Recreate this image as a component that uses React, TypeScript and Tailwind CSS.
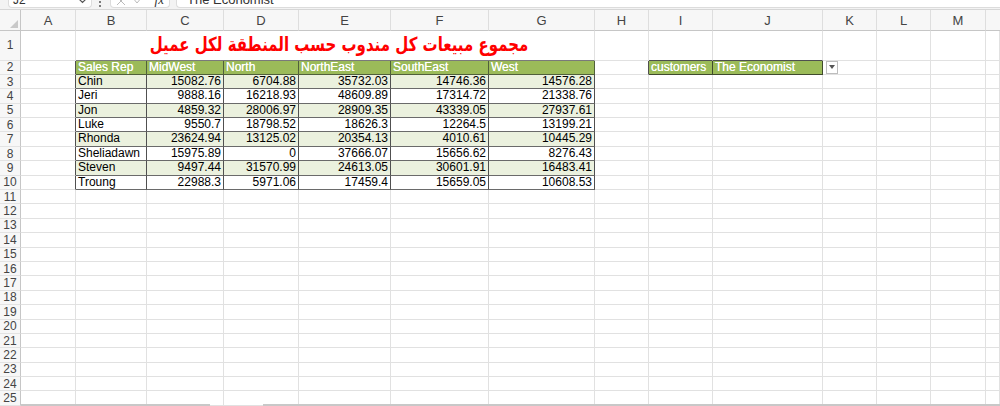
import React from "react";

const COLS = "grid grid-cols-[21px_55px_71px_77px_75px_92px_98px_106px_54px_64px_110px_54px_54px_55px_14px]";
const LETTERS = ["A", "B", "C", "D", "E", "F", "G", "H", "I", "J", "K", "L", "M", "N"];

const HEAD = ["Sales Rep", "MidWest", "North", "NorthEast", "SouthEast", "West"];
const DATA: (string)[][] = [
  ["Chin", "15082.76", "6704.88", "35732.03", "14746.36", "14576.28"],
  ["Jeri", "9888.16", "16218.93", "48609.89", "17314.72", "21338.76"],
  ["Jon", "4859.32", "28006.97", "28909.35", "43339.05", "27937.61"],
  ["Luke", "9550.7", "18798.52", "18626.3", "12264.5", "13199.21"],
  ["Rhonda", "23624.94", "13125.02", "20354.13", "4010.61", "10445.29"],
  ["Sheliadawn", "15975.89", "0", "37666.07", "15656.62", "8276.43"],
  ["Steven", "9497.44", "31570.99", "24613.05", "30601.91", "16483.41"],
  ["Troung", "22988.3", "5971.06", "17459.4", "15659.05", "10608.53"],
];

const font = { fontFamily: "'Liberation Sans', Arial, sans-serif" };

function RowHeader({ n }: { n: number }) {
  return (
    <div className="flex items-center justify-center border-r border-b border-r-[#c6c6c6] border-b-[#e3e3e3] bg-[#f7f7f7] text-[12px] leading-none text-[#444]">
      {n}
    </div>
  );
}

function Grid({ dark, className = "" }: { dark?: "r" | "b" | "rb"; className?: string }) {
  const r = dark === "r" || dark === "rb" ? "border-r-[#505050]" : "border-r-[#e1e1e1]";
  const b = dark === "b" || dark === "rb" ? "border-b-[#505050]" : "border-b-[#e1e1e1]";
  return <div className={`border-r border-b ${r} ${b} ${className}`} />;
}

export default function App() {
  return (
    <div className="w-[1000px] h-[406px] overflow-hidden bg-white relative" style={font}>
      {/* formula bar (cut off) */}
      <div className="h-[10px] bg-[#f3f3f3] border-b border-[#d6d6d6] overflow-hidden flex items-end">
        <div className="ml-[8px] w-[84px] h-[20px] mb-[1px] bg-white rounded-b-[4px] border border-[#dcdcdc] border-t-0 flex items-end justify-between px-[4px] pb-[1px] text-[12px] leading-none text-[#333]">
          <span>J2</span>
          <svg width="9" height="6" viewBox="0 0 9 6" className="mb-[2px]"><path d="M1 1l3.5 3.5L8 1" fill="none" stroke="#555" strokeWidth="1.2" /></svg>
        </div>
        <div className="ml-[7px] w-[3px] h-[8px] flex flex-col justify-end gap-[2px] mb-[2px]">
          <div className="w-[2px] h-[2px] bg-[#555] rounded-full" />
          <div className="w-[2px] h-[2px] bg-[#555] rounded-full" />
        </div>
        <div className="ml-[8px] w-[60px] h-[20px] mb-[1px] bg-white rounded-b-[4px] border border-[#dcdcdc] border-t-0 flex items-end px-[5px] pb-[1px] gap-[6px]">
          <svg width="10" height="10" viewBox="0 0 10 10"><path d="M1 1l8 8M9 1l-8 8" stroke="#bbb" strokeWidth="1" /></svg>
          <svg width="11" height="10" viewBox="0 0 11 10"><path d="M1 2l4 5 5-6" fill="none" stroke="#bbb" strokeWidth="1" /></svg>
          <span className="ml-auto text-[13px] italic leading-none text-[#333]" style={{ fontFamily: "'Liberation Serif', serif" }}>fx</span>
        </div>
        <div className="ml-[6px] flex-1 h-[20px] mb-[1px] bg-white rounded-bl-[4px] border border-[#dcdcdc] border-t-0 border-r-0 flex items-end pl-[10px] pb-[1px] text-[13px] leading-none text-[#333]">
          The Economist
        </div>
      </div>

      {/* column headers */}
      <div className={`${COLS} h-[21px]`}>
        <div className="relative border-r border-b border-[#c6c6c6] bg-[#f7f7f7]">
          <svg className="absolute right-[2px] bottom-[2px]" width="8" height="8" viewBox="0 0 8 8"><path d="M8 0L8 8L0 8Z" fill="#c9c9c9" /></svg>
        </div>
        {LETTERS.map((l, i) => (
          <div key={l} className={`flex items-center justify-center border-b border-[#c6c6c6] bg-[#f7f7f7] text-[13px] leading-none text-[#444] ${i < 13 ? "border-r border-r-[#dedede]" : ""}`}>
            {i < 13 ? l : ""}
          </div>
        ))}
      </div>

      {/* row 1 */}
      <div className={`${COLS} h-[29.5px]`}>
        <RowHeader n={1} />
        <Grid />
        <div className="col-span-6 flex items-center justify-center pl-[8px] border-r border-b border-r-[#e1e1e1] border-b-[#7a7a7a]">
          <span dir="rtl" className="text-[#ff0000] font-bold text-[15px] leading-none scale-y-[1.3]" style={{ fontFamily: "'DejaVu Sans', sans-serif" }}>
            مجموع مبيعات كل مندوب حسب المنطقة لكل عميل
          </span>
        </div>
        <Grid />
        <Grid dark="b" />
        <Grid dark="b" />
        <Grid />
        <Grid />
        <Grid />
        <Grid />
      </div>

      {/* row 2 */}
      <div className={`${COLS} h-[14.4px]`}>
        <RowHeader n={2} />
        <Grid dark="r" />
        {HEAD.map((h) => (
          <div key={h} className="bg-[#9bbb59] border-r border-b border-[#50603a] text-white text-[12px] leading-[13px] pl-[2px] whitespace-nowrap overflow-hidden [text-shadow:0_0_0.4px_#fff]">
            {h}
          </div>
        ))}
        <Grid dark="r" />
        <div className="bg-[#9bbb59] border-r border-b border-[#3f4a2c] text-white text-[12px] leading-[13px] pl-[2px] whitespace-nowrap [text-shadow:0_0_0.4px_#fff]">customers</div>
        <div className="bg-[#9bbb59] border-r border-b border-[#3f4a2c] text-white text-[12px] leading-[13px] pl-[2px] whitespace-nowrap [text-shadow:0_0_0.4px_#fff]">The Economist</div>
        <div className="relative border-r border-b border-r-[#e1e1e1] border-b-[#e1e1e1]">
          <div className="absolute left-[3px] top-[0px] w-[12px] h-[13px] bg-white border border-[#bdbdbd] flex items-center justify-center">
            <svg width="6" height="4" viewBox="0 0 6 4"><path d="M0 0h6L3 4Z" fill="#555" /></svg>
          </div>
        </div>
        <Grid />
        <Grid />
        <Grid />
      </div>

      {/* rows 3-10 */}
      {DATA.map((row, ri) => (
        <div key={ri} className={`${COLS} h-[14.4px]`}>
          <RowHeader n={ri + 3} />
          <Grid dark="r" />
          {row.map((v, ci) => (
            <div
              key={ci}
              className={`border-r border-b border-r-[#505050] border-b-[#6a6a6a] text-[12px] leading-[13px] text-black whitespace-nowrap overflow-hidden ${ri % 2 === 0 ? "bg-[#ebf1de]" : "bg-white"} ${ci === 0 ? "pl-[2px] text-left" : "pr-[2px] text-right"}`}
            >
              {v}
            </div>
          ))}
          {Array.from({ length: 7 }).map((_, k) => (
            <Grid key={k} />
          ))}
        </div>
      ))}

      {/* rows 11-25 */}
      {Array.from({ length: 15 }).map((_, k) => (
        <div key={k} className={`${COLS} h-[14.4px]`}>
          <RowHeader n={k + 11} />
          {Array.from({ length: 14 }).map((_, j) => (
            <Grid key={j} />
          ))}
        </div>
      ))}
      <div className="absolute left-[21px] bottom-0 w-[189px] h-[2px] bg-[#c8c8c8]" />
      <div className="absolute left-[263px] right-0 bottom-0 h-[2px] bg-[#c8c8c8]" />
    </div>
  );
}
